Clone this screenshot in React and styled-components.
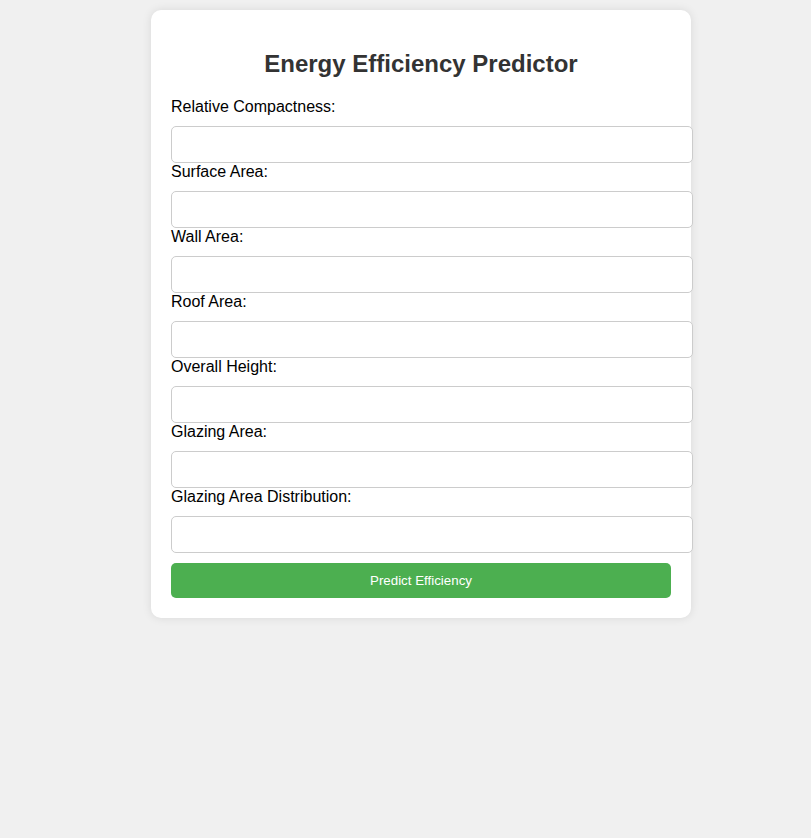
import React from "react";
import styled, { createGlobalStyle } from "styled-components";

const Global = createGlobalStyle`
  html, body { margin: 0; padding: 0; background: #f0f0f0; }
  body { font-family: "Liberation Sans", Arial, sans-serif; }
`;

const Page = styled.div`
  display: flex;
  justify-content: center;
  align-items: flex-start;
  padding: 10px 0 0 31px;
  min-height: 828px;
  box-sizing: border-box;
`;

const Card = styled.div`
  width: 500px;
  padding: 20px;
  background: #fff;
  border-radius: 10px;
  box-shadow: 0 0 10px rgba(0, 0, 0, 0.1);
`;

const Title = styled.h2`
  margin: 20px 0 20px;
  font-size: 24px;
  line-height: 28px;
  font-weight: bold;
  color: #333;
  text-align: center;
`;

const Label = styled.label`
  display: block;
  font-size: 16px;
  line-height: 18px;
  color: #000;
  margin-bottom: 10px;
`;

const Input = styled.input`
  display: block;
  width: 500px;
  height: 15px;
  padding: 10px;
  margin: 0;
  border: 1px solid #ccc;
  border-radius: 5px;
  font-family: "Liberation Sans", Arial, sans-serif;
  font-size: 13.33px;
  background: #fff;
  outline: none;
`;

const Button = styled.button`
  display: block;
  width: 500px;
  height: 35px;
  margin-top: 10px;
  padding: 10px;
  border: none;
  border-radius: 5px;
  background: #4caf50;
  color: #fff;
  font-family: "Liberation Sans", Arial, sans-serif;
  font-size: 13.33px;
  line-height: 15px;
  cursor: pointer;
`;

const fields = [
  "Relative Compactness",
  "Surface Area",
  "Wall Area",
  "Roof Area",
  "Overall Height",
  "Glazing Area",
  "Glazing Area Distribution",
];

export default function App() {
  return (
    <>
      <Global />
      <Page>
        <Card>
          <Title>Energy Efficiency Predictor</Title>
          {fields.map((f) => (
            <div key={f}>
              <Label>{f}:</Label>
              <Input type="text" />
            </div>
          ))}
          <Button>Predict Efficiency</Button>
        </Card>
      </Page>
    </>
  );
}
